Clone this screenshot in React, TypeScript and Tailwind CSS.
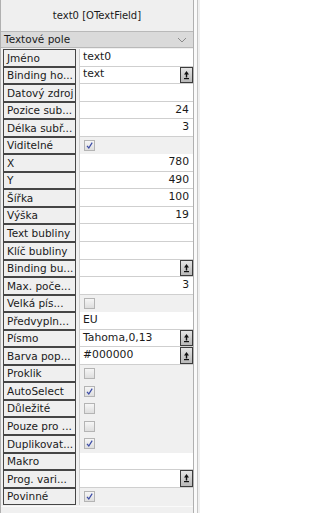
type Druh = 'text' | 'num' | 'combo' | 'check'

type Radek = {
  popis: string
  druh: Druh
  hodnota?: string
  zaskrtnuto?: boolean
}

const radky: Radek[] = [
  { popis: 'Jméno', druh: 'text', hodnota: 'text0' },
  { popis: 'Binding ho...', druh: 'combo', hodnota: 'text' },
  { popis: 'Datový zdroj', druh: 'text', hodnota: '' },
  { popis: 'Pozice sub...', druh: 'num', hodnota: '24' },
  { popis: 'Délka subř...', druh: 'num', hodnota: '3' },
  { popis: 'Viditelné', druh: 'check', zaskrtnuto: true },
  { popis: 'X', druh: 'num', hodnota: '780' },
  { popis: 'Y', druh: 'num', hodnota: '490' },
  { popis: 'Šířka', druh: 'num', hodnota: '100' },
  { popis: 'Výška', druh: 'num', hodnota: '19' },
  { popis: 'Text bubliny', druh: 'text', hodnota: '' },
  { popis: 'Klíč bubliny', druh: 'text', hodnota: '' },
  { popis: 'Binding bu...', druh: 'combo', hodnota: '' },
  { popis: 'Max. poče...', druh: 'num', hodnota: '3' },
  { popis: 'Velká pís...', druh: 'check', zaskrtnuto: false },
  { popis: 'Předvypln...', druh: 'text', hodnota: 'EU' },
  { popis: 'Písmo', druh: 'combo', hodnota: 'Tahoma,0,13' },
  { popis: 'Barva pop...', druh: 'combo', hodnota: '#000000' },
  { popis: 'Proklik', druh: 'check', zaskrtnuto: false },
  { popis: 'AutoSelect', druh: 'check', zaskrtnuto: true },
  { popis: 'Důležité', druh: 'check', zaskrtnuto: false },
  { popis: 'Pouze pro ...', druh: 'check', zaskrtnuto: false },
  { popis: 'Duplikovat...', druh: 'check', zaskrtnuto: true },
  { popis: 'Makro', druh: 'text', hodnota: '' },
  { popis: 'Prog. vari...', druh: 'combo', hodnota: '' },
  { popis: 'Povinné', druh: 'check', zaskrtnuto: true },
]

const Zaskrtavatko = ({ zaskrtnuto }: { zaskrtnuto: boolean }) => (
  <div className="ml-[4px] grid h-[11px] w-[11px] place-items-center border border-[#b4b4b4] bg-gradient-to-b from-[#f6f6f6] to-[#dedede]">
    {zaskrtnuto && (
      <svg width="9" height="9" viewBox="0 0 9 9">
        <path d="M2 4.8 L3.8 7 L7.2 1.6" fill="none" stroke="#3b4ba6" strokeWidth="1.2" />
      </svg>
    )}
  </div>
)

const TlacitkoVyber = () => (
  <div className="grid h-full w-[13px] shrink-0 place-items-center border border-[#3c3c3c] bg-gradient-to-b from-[#e4e4e4] to-[#b9b9b9]">
    <svg width="7" height="10" viewBox="0 0 7 10">
      <path d="M3.5 1 L6 4.5 L1 4.5 Z" fill="#111" />
      <rect x="2.8" y="4" width="1.4" height="3.5" fill="#111" />
      <rect x="1" y="8" width="5" height="1.2" fill="#111" />
    </svg>
  </div>
)

const Hodnota = ({ radek }: { radek: Radek }) => {
  if (radek.druh === 'check') {
    return (
      <div className="flex h-full flex-1 items-center border-l border-[#cfcfcf]">
        <Zaskrtavatko zaskrtnuto={!!radek.zaskrtnuto} />
      </div>
    )
  }
  return (
    <div className="flex h-full flex-1 items-stretch border-b border-l border-[#cfcfcf] bg-white text-[10.8px]">
      <div
        className={`flex flex-1 items-center px-[3px] ${radek.druh === 'num' ? 'justify-end pr-[4px]' : ''}`}
      >
        {radek.hodnota}
      </div>
      {radek.druh === 'combo' && <TlacitkoVyber />}
    </div>
  )
}

export default function App() {
  return (
    <div className="flex h-[513px] w-[200px] overflow-hidden bg-[#f0f0f0] font-['DejaVu_Sans',sans-serif] text-[10.5px] leading-none text-[#1a1a1a]">
      <div className="flex w-[194px] flex-col border-l border-r border-[#b0b0b0]">
        <div className="flex h-[31px] items-center justify-center bg-[#efefef] text-[10px]">
          text0 [OTextField]
        </div>
        <div className="flex h-[17px] items-center justify-between border-t border-b border-[#b9b9b9] bg-[#dadada] px-[3px]">
          <span>Textové pole</span>
          <svg width="10" height="6" viewBox="0 0 10 6" className="mr-[3px]">
            <path d="M1 1 L5 5 L9 1" fill="none" stroke="#8a8a8a" strokeWidth="1" />
          </svg>
        </div>
        <div className="flex flex-col pt-[1px]">
          {radky.map((r) => (
            <div key={r.popis} className="flex h-[17.55px] items-stretch">
              <div className="ml-[2px] flex w-[73px] items-center overflow-hidden whitespace-nowrap border border-[#454545] bg-[#efefef] px-[3px]">
                {r.popis}
              </div>
              <div className="w-[3px]" />
              <Hodnota radek={r} />
            </div>
          ))}
        </div>
        <div className="mt-[1px] flex-1 border-t border-[#fafafa]" />
      </div>
      <div className="w-[3px] bg-[#fafafa]" />
      <div className="w-px bg-[#c4c4c4]" />
    </div>
  )
}
